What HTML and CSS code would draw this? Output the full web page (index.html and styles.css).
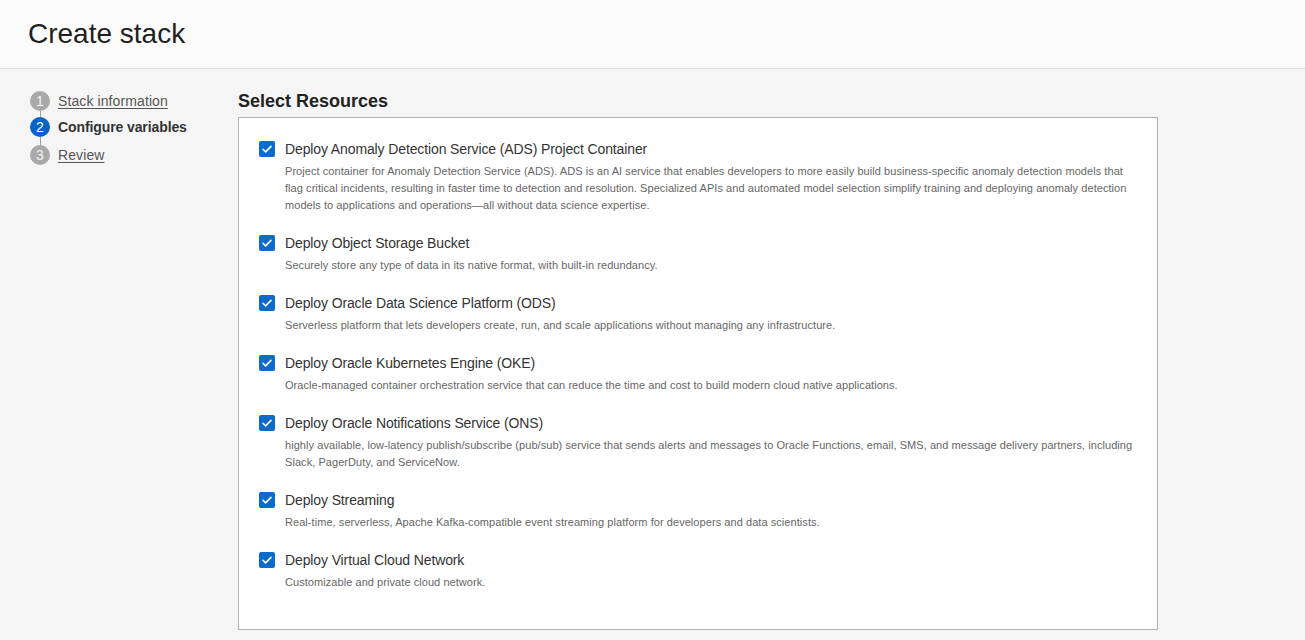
FILE: index.html
```html
<!DOCTYPE html>
<html>
<head>
<meta charset="utf-8">
<link rel="stylesheet" href="styles.css">
</head>
<body>
<header class="header"><h1 class="title">Create stack</h1></header>
<div class="main">
  <nav class="steps">
    <div class="step"><span class="num">1</span><a class="step-link">Stack information</a></div>
    <div class="step current"><span class="num">2</span><span class="step-label">Configure variables</span></div>
    <div class="step last"><span class="num">3</span><a class="step-link">Review</a></div>
  </nav>
  <section class="content">
    <h2 class="heading">Select Resources</h2>
    <div class="box">
      <div class="item">
        <span class="cb"><svg viewBox="0 0 16 16" width="16" height="16"><path d="M4 8.3l2.6 2.6L12 5.4" fill="none" stroke="#fff" stroke-width="1.6" stroke-linecap="round" stroke-linejoin="round"/></svg></span>
        <div class="text">
          <div class="label">Deploy Anomaly Detection Service (ADS) Project Container</div>
          <div class="desc">Project container for Anomaly Detection Service (ADS). ADS is an AI service that enables developers to more easily build business-specific anomaly detection models that flag critical incidents, resulting in faster time to detection and resolution. Specialized APIs and automated model selection simplify training and deploying anomaly detection models to applications and operations—all without data science expertise.</div>
        </div>
      </div>
      <div class="item">
        <span class="cb"><svg viewBox="0 0 16 16" width="16" height="16"><path d="M4 8.3l2.6 2.6L12 5.4" fill="none" stroke="#fff" stroke-width="1.6" stroke-linecap="round" stroke-linejoin="round"/></svg></span>
        <div class="text">
          <div class="label">Deploy Object Storage Bucket</div>
          <div class="desc">Securely store any type of data in its native format, with built-in redundancy.</div>
        </div>
      </div>
      <div class="item">
        <span class="cb"><svg viewBox="0 0 16 16" width="16" height="16"><path d="M4 8.3l2.6 2.6L12 5.4" fill="none" stroke="#fff" stroke-width="1.6" stroke-linecap="round" stroke-linejoin="round"/></svg></span>
        <div class="text">
          <div class="label">Deploy Oracle Data Science Platform (ODS)</div>
          <div class="desc">Serverless platform that lets developers create, run, and scale applications without managing any infrastructure.</div>
        </div>
      </div>
      <div class="item">
        <span class="cb"><svg viewBox="0 0 16 16" width="16" height="16"><path d="M4 8.3l2.6 2.6L12 5.4" fill="none" stroke="#fff" stroke-width="1.6" stroke-linecap="round" stroke-linejoin="round"/></svg></span>
        <div class="text">
          <div class="label">Deploy Oracle Kubernetes Engine (OKE)</div>
          <div class="desc">Oracle-managed container orchestration service that can reduce the time and cost to build modern cloud native applications.</div>
        </div>
      </div>
      <div class="item">
        <span class="cb"><svg viewBox="0 0 16 16" width="16" height="16"><path d="M4 8.3l2.6 2.6L12 5.4" fill="none" stroke="#fff" stroke-width="1.6" stroke-linecap="round" stroke-linejoin="round"/></svg></span>
        <div class="text">
          <div class="label">Deploy Oracle Notifications Service (ONS)</div>
          <div class="desc">highly available, low-latency publish/subscribe (pub/sub) service that sends alerts and messages to Oracle Functions, email, SMS, and message delivery partners, including Slack, PagerDuty, and ServiceNow.</div>
        </div>
      </div>
      <div class="item">
        <span class="cb"><svg viewBox="0 0 16 16" width="16" height="16"><path d="M4 8.3l2.6 2.6L12 5.4" fill="none" stroke="#fff" stroke-width="1.6" stroke-linecap="round" stroke-linejoin="round"/></svg></span>
        <div class="text">
          <div class="label">Deploy Streaming</div>
          <div class="desc">Real-time, serverless, Apache Kafka-compatible event streaming platform for developers and data scientists.</div>
        </div>
      </div>
      <div class="item">
        <span class="cb"><svg viewBox="0 0 16 16" width="16" height="16"><path d="M4 8.3l2.6 2.6L12 5.4" fill="none" stroke="#fff" stroke-width="1.6" stroke-linecap="round" stroke-linejoin="round"/></svg></span>
        <div class="text">
          <div class="label">Deploy Virtual Cloud Network</div>
          <div class="desc">Customizable and private cloud network.</div>
        </div>
      </div>
    </div>
  </section>
</div>
</body>
</html>
```
FILE: styles.css
```css
* { box-sizing: border-box; }
html, body { margin: 0; padding: 0; }
body {
  font-family: "Liberation Sans", Arial, sans-serif;
  background: #f5f5f5;
  color: #333;
  height: 640px;
  overflow: hidden;
}
.header {
  height: 69px;
  background: #fbfbfb;
  border-bottom: 1px solid #dedede;
  padding: 0 28px;
  display: flex;
  align-items: center;
}
.title {
  margin: 0;
  font-weight: 400;
  font-size: 28px;
  color: #1f1f1f;
  letter-spacing: 0;
}
.main {
  display: flex;
  padding: 22px 0 0 30px;
}
.steps {
  width: 208px;
  display: flex;
  flex-direction: column;
}
.step {
  display: flex;
  align-items: center;
  height: 20px;
  margin-bottom: 6px;
  position: relative;
  font-size: 14px;
}
.step.last { margin-top: 2px; }
.step:not(.last)::after {
  content: "";
  position: absolute;
  left: 9.5px;
  top: 20px;
  width: 1px;
  height: 8px;
  background: #9e9e9e;
}
.num {
  width: 20px;
  height: 20px;
  border-radius: 50%;
  background: #a9a9a9;
  color: #f2f2f2;
  font-size: 14px;
  display: flex;
  align-items: center;
  justify-content: center;
  margin-right: 8px;
  flex: none;
}
.current .num { background: #0a64c4; color: #fff; }
.step-link {
  color: #555;
  text-decoration: underline;
  text-underline-offset: 2px;
  letter-spacing: 0.1px;
}
.step-label { font-weight: 700; color: #333; letter-spacing: -0.1px; }
.content { width: 920px; }
.heading {
  margin: -1px 0 5px;
  font-size: 18px;
  font-weight: 700;
  color: #222;
  line-height: 22px;
}
.box {
  background: #fff;
  border: 1px solid #adb1b8;
  padding: 21px 20px 20px 20px;
  height: 513px;
}
.item {
  display: flex;
  gap: 10px;
  margin-bottom: 19px;
}
.cb {
  width: 16px;
  height: 16px;
  border-radius: 2px;
  background: #0b6bcb;
  flex: none;
  margin-top: 2px;
  display: block;
}
.cb svg { display: block; }
.text { flex: 1; }
.label {
  font-size: 14px;
  line-height: 20px;
  color: #333;
  margin-bottom: 4px;
  letter-spacing: -0.12px;
}
.desc {
  font-size: 11px;
  line-height: 17px;
  color: #666;
  letter-spacing: 0.06px;
}
```
